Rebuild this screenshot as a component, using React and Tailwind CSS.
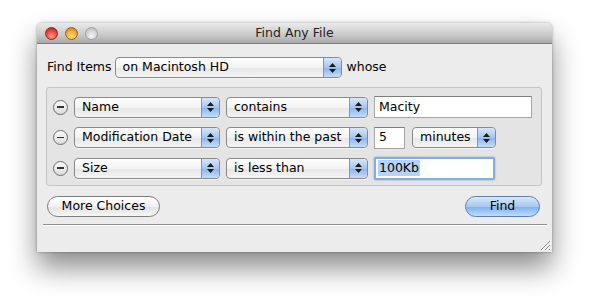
import React from "react";

const font = { fontFamily: '"DejaVu Sans", "Liberation Sans", sans-serif' };

function Stepper() {
  return (
    <div className="flex h-full w-[18px] flex-col items-center justify-center gap-[2px] rounded-r-[4px] border-l border-[#7b96c0] bg-[linear-gradient(#d6e6fb,#a5c6f0_50%,#8ab4ec_51%,#c6ddf9)]">
      <svg width="7" height="4" viewBox="0 0 7 4"><path d="M0 4 L3.5 0 L7 4 Z" fill="#1a1a1a" /></svg>
      <svg width="7" height="4" viewBox="0 0 7 4"><path d="M0 0 L3.5 4 L7 0 Z" fill="#1a1a1a" /></svg>
    </div>
  );
}

function Popup({ label, w }) {
  return (
    <div className={`flex h-[21px] ${w} items-stretch overflow-hidden rounded-[4px] border border-[#8a8a8a] bg-[linear-gradient(#ffffff,#f3f3f3_50%,#e6e6e6_51%,#f4f4f4)] shadow-[0_1px_0_rgba(255,255,255,0.6)]`}>
      <div className="flex flex-1 items-center pl-[7px] text-[12.5px] text-black">{label}</div>
      <Stepper />
    </div>
  );
}

function Field({ value, w, focus }) {
  if (focus) {
    return (
      <div className={`flex h-[23px] ${w} items-center rounded-[2px] border-[2px] border-[#86acdc] bg-white shadow-[0_0_2px_#6e9fd8]`}>
        <div className="ml-[2px] flex h-[16px] items-center bg-[#b5d3f6] px-[1px] text-[12.5px] text-black">{value}</div>
      </div>
    );
  }
  return (
    <div className={`flex h-[22px] ${w} items-center border border-[#a5a5a5] border-t-[#7d7d7d] bg-white pl-[4px] text-[12.5px] text-black`}>
      {value}
    </div>
  );
}

function Minus() {
  return (
    <div className="flex h-[15px] w-[15px] items-center justify-center rounded-full border border-[#6c6c6c] bg-[linear-gradient(#fafafa,#dcdcdc)]">
      <div className="h-[1.5px] w-[7px] bg-[#333]" />
    </div>
  );
}

function Row({ a, b, children }) {
  return (
    <div className="flex h-[22px] items-center">
      <div className="ml-[6px] mr-[6px]"><Minus /></div>
      <Popup label={a} w="w-[146px]" />
      <div className="ml-[6px]"><Popup label={b} w="w-[142px]" /></div>
      <div className="ml-[6px] flex items-center gap-[7px]">{children}</div>
    </div>
  );
}

export default function App() {
  return (
    <div className="h-[305px] w-[590px] bg-white pl-[37px] pt-[23px]" style={font}>
      <div className="flex h-[229px] w-[515px] flex-col rounded-t-[5px] bg-[#ececec] shadow-[0_16px_28px_rgba(0,0,0,0.45),0_0_3px_rgba(0,0,0,0.35)]">
        {/* title bar */}
        <div className="relative flex h-[21px] items-center rounded-t-[5px] border-b border-[#7a7a7a] bg-[linear-gradient(#eaeaea,#c9c9c9_60%,#a9a9a9)]">
          <div className="ml-[8px] flex gap-[7px]">
            <div className="h-[13px] w-[13px] rounded-full border border-[#8a2a22] bg-[radial-gradient(circle_at_50%_75%,#ff9a8a,#e8453a_55%,#a81c13)]" />
            <div className="h-[13px] w-[13px] rounded-full border border-[#9a6410] bg-[radial-gradient(circle_at_50%_75%,#ffe08a,#f2a93a_55%,#b86a0c)]" />
            <div className="h-[13px] w-[13px] rounded-full border border-[#a0a0a0] bg-[radial-gradient(circle_at_50%_75%,#f4f4f4,#d4d4d4_55%,#b4b4b4)]" />
          </div>
          <div className="absolute inset-0 flex items-center justify-center text-[12.5px] text-[#222]">Find Any File</div>
        </div>

        {/* find items row */}
        <div className="ml-[10px] mt-[13px] flex h-[21px] items-center">
          <span className="text-[12.5px] text-black">Find Items</span>
          <div className="ml-[3px]"><Popup label="on Macintosh HD" w="w-[227px]" /></div>
          <span className="ml-[5px] text-[12.5px] text-black">whose</span>
        </div>

        {/* group box */}
        <div className="ml-[9px] mt-[9px] flex w-[496px] flex-col gap-[8.5px] rounded-[3px] border border-[#c4c4c4] bg-[#e4e4e4] pb-[6px] pt-[8px]">
          <Row a="Name" b="contains">
            <Field value="Macity" w="w-[158px]" />
          </Row>
          <Row a="Modification Date" b="is within the past">
            <Field value="5" w="w-[31px]" />
            <Popup label="minutes" w="w-[84px]" />
          </Row>
          <Row a="Size" b="is less than">
            <Field value="100Kb" w="w-[121px]" focus />
          </Row>
        </div>

        {/* buttons */}
        <div className="mt-[10px] flex h-[21px] items-center justify-between pl-[10px] pr-[12px]">
          <div className="flex h-[21px] w-[113px] items-center justify-center rounded-full border border-[#7c7c7c] bg-[linear-gradient(#ffffff,#f2f2f2_50%,#e2e2e2_51%,#f6f6f6)] text-[12.5px] text-black">More Choices</div>
          <div className="flex h-[21px] w-[75px] items-center justify-center rounded-full border border-[#5d7fae] bg-[linear-gradient(#d9e8fb,#a7c8f1_50%,#7eb0ee_51%,#bfdcfb)] text-[12.5px] text-black">Find</div>
        </div>

        {/* separator */}
        <div className="ml-[6px] mt-[7px] h-[2px] w-[504px] border-t border-[#8e8e8e] border-b-white" style={{ borderBottomWidth: 1, borderBottomStyle: "solid" }} />

        {/* footer */}
        <div className="flex flex-1 items-end justify-end">
          <svg width="12" height="12" viewBox="0 0 12 12" className="mb-[1px] mr-[1px]">
            <path d="M11 2 L2 11 M11 6 L6 11 M11 10 L10 11" stroke="#8a8a8a" strokeWidth="1" />
            <path d="M11.8 2.8 L2.8 11.8 M11.8 6.8 L6.8 11.8" stroke="#ffffff" strokeWidth="1" />
          </svg>
        </div>
      </div>
    </div>
  );
}
